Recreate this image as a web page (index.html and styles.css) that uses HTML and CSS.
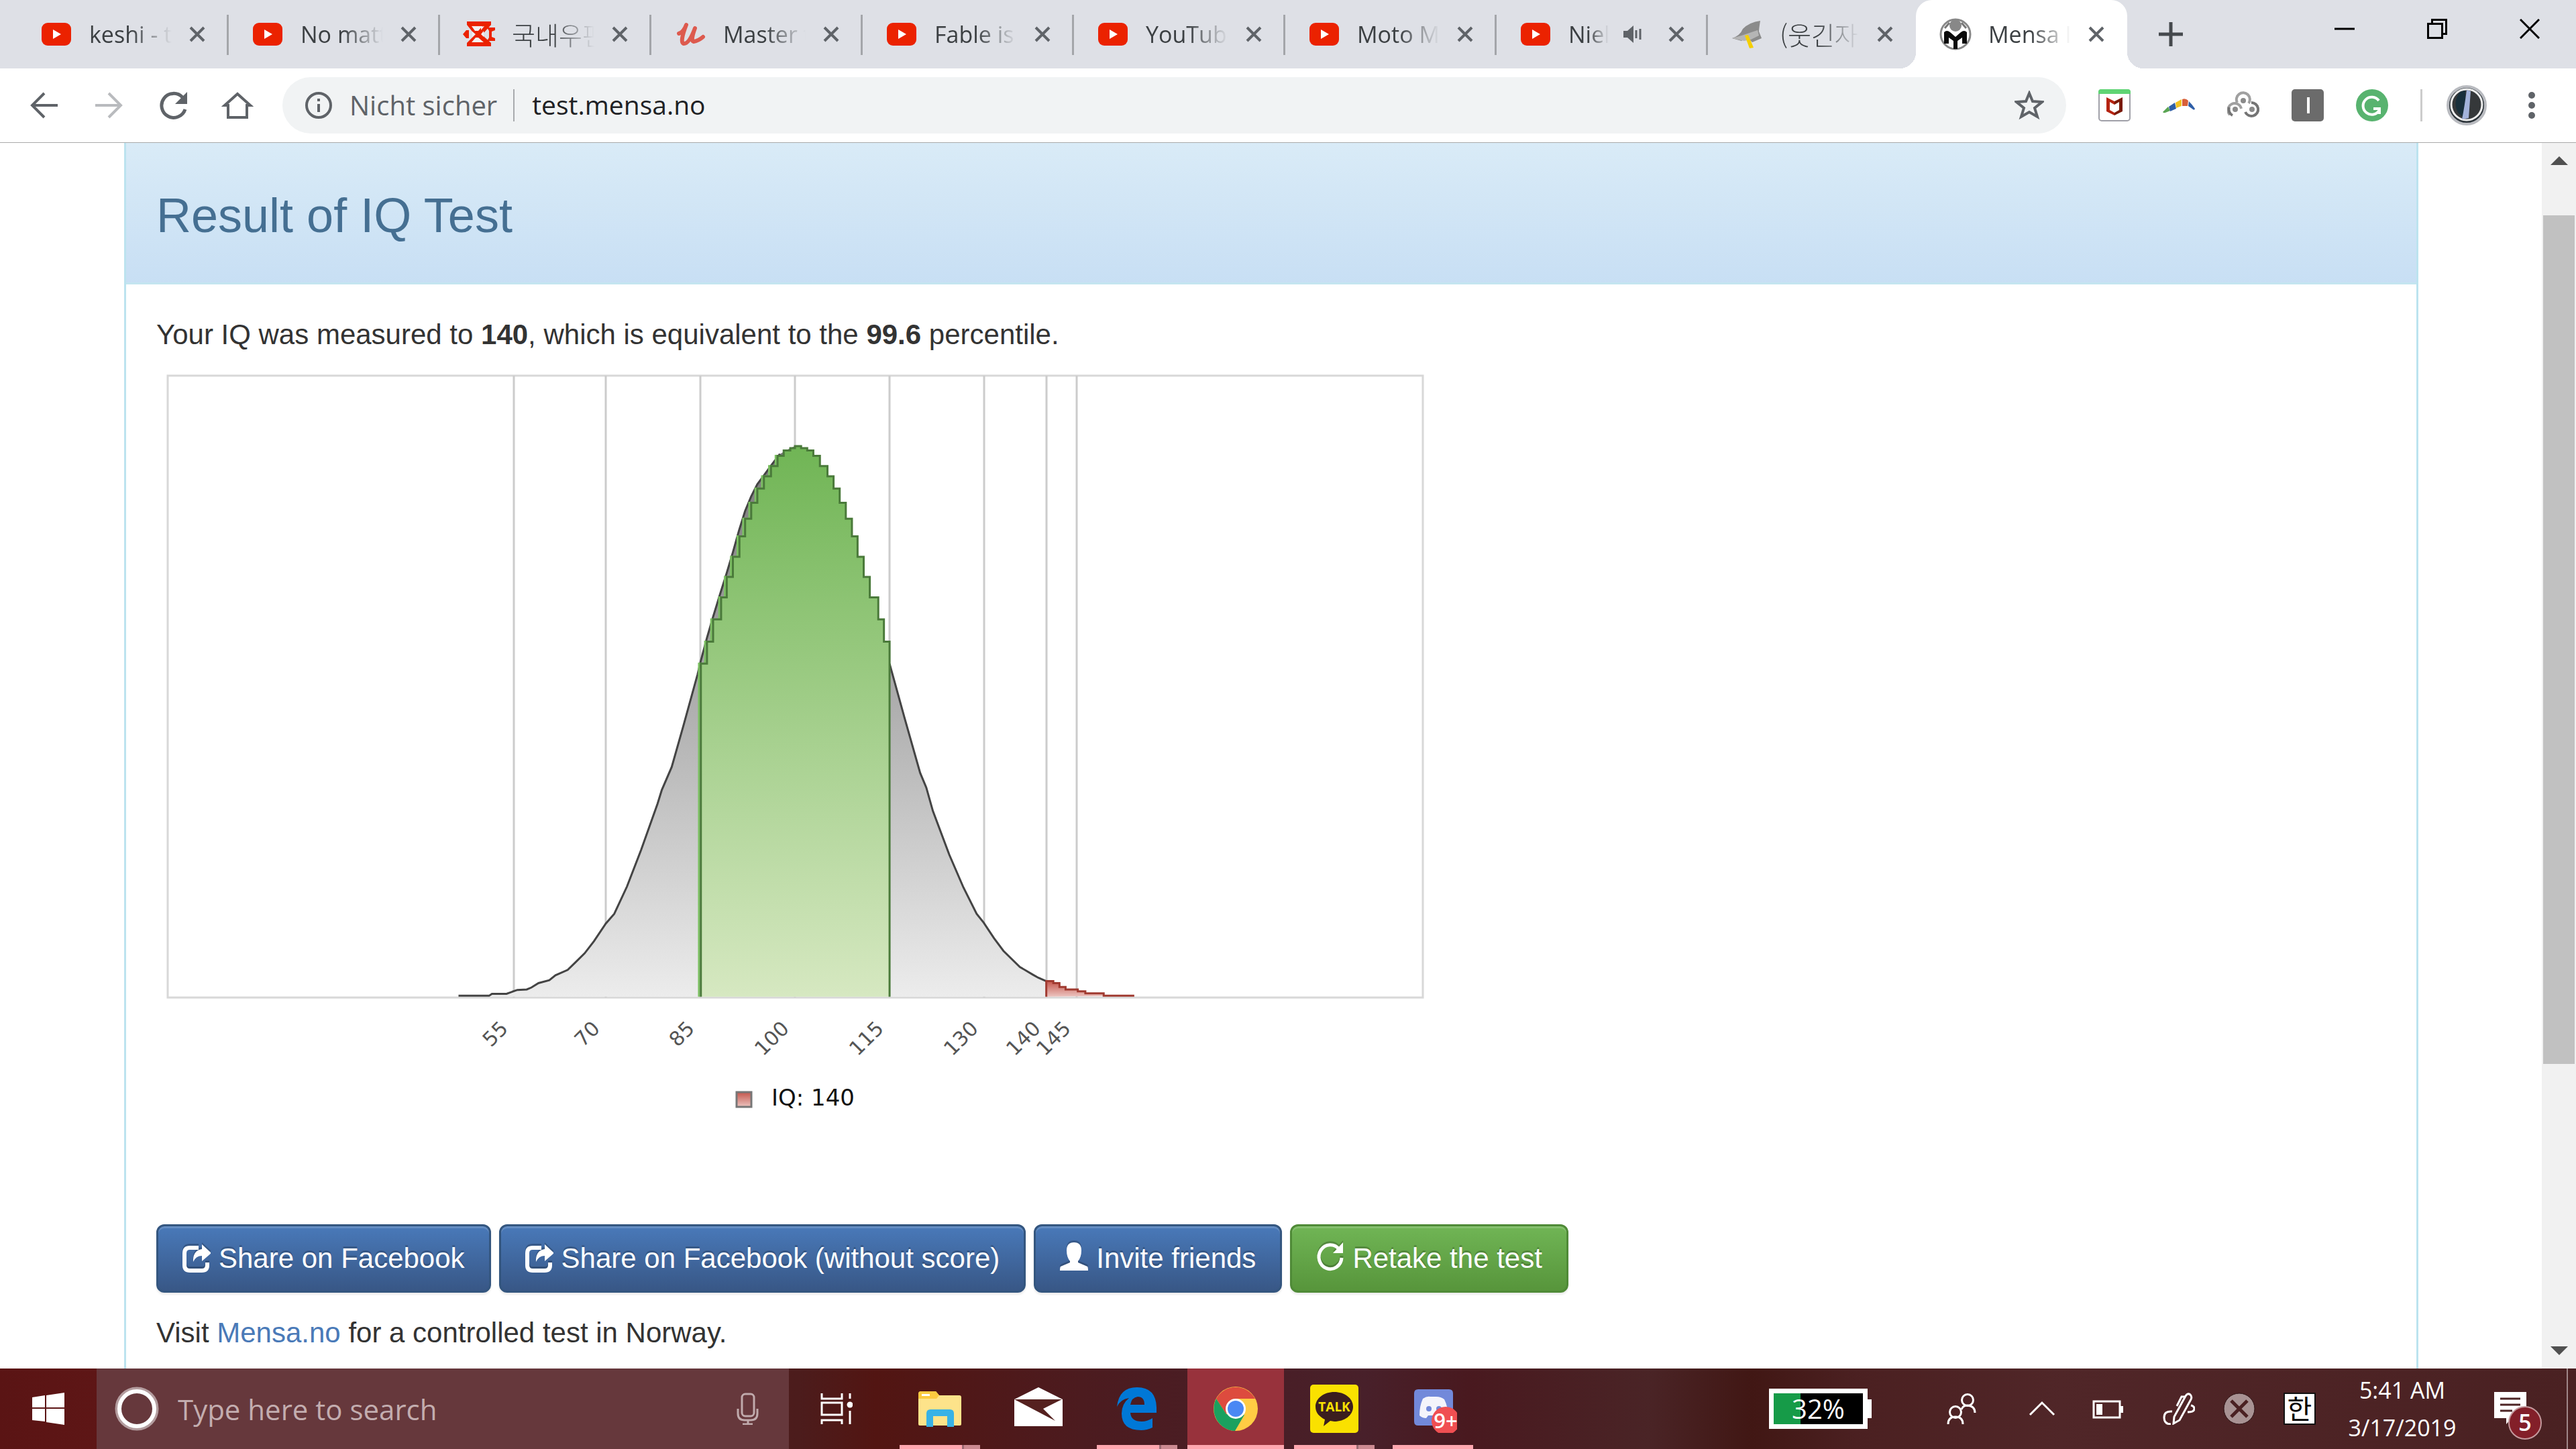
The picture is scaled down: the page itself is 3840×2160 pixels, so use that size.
FILE: index.html
```html
<!DOCTYPE html>
<html lang="en">
<head>
<meta charset="utf-8">
<title>Mensa</title>
<link rel="stylesheet" href="styles.css">
</head>
<body>
<svg class="defs" aria-hidden="true">
  <symbol id="yt" viewBox="0 0 48 48"><rect x="2" y="7" width="44" height="34" rx="9" fill="#eb2200"/><path d="M19 17v14l12-7z" fill="#fff"/></symbol>
  <symbol id="x" viewBox="0 0 24 24"><path d="M2 2l20 20M22 2L2 22" stroke="#5f6368" stroke-width="4" fill="none"/></symbol>
  <symbol id="share" viewBox="0 0 42 42"><path d="M24 5H11Q3 5 3 13v18q0 8 8 8h18q8 0 8-8v-4" fill="none" stroke="currentColor" stroke-width="6"/><path d="M29 0l14 13-14 12v-8q-9 0-13 9-1-17 13-19z" fill="currentColor"/></symbol>
</svg>

<header class="tabstrip">
  <div class="tab"><svg class="fav"><use href="#yt"/></svg><a class="title" href="#">keshi - the</a><button class="close" aria-label="Close"><svg><use href="#x"/></svg></button></div>
  <div class="tab"><svg class="fav"><use href="#yt"/></svg><a class="title" href="#">No matter</a><button class="close" aria-label="Close"><svg><use href="#x"/></svg></button></div>
  <div class="tab"><svg class="fav" viewBox="0 0 48 48"><path d="M6 5h36v5L33 20l-5 4 5 5 9 8v5H6v-5l8-8 5-5-5-4-8-10zM0 24l5-6h4v12H5zM36 14h12v4l-5 2v8l5 2v4H36l3-5V19z" fill="#eb2200"/><path d="M13 12h16l-6 7h-5zM27 13l5-1-5 6zM13 36h18l-8-7h-4zM14 20l4 4-4 4zM31 19l-4 5 4 4z" fill="#f4f0f2"/></svg><a class="title" lang="ko" href="#">국내우편</a><button class="close" aria-label="Close"><svg><use href="#x"/></svg></button></div>
  <div class="tab"><svg class="fav" viewBox="0 0 48 48"><path d="M7 23Q14 21 18 10Q8 36 14 38Q22 39 31 15Q24 34 29 35Q36 34 43 28" fill="none" stroke="#dd5a4e" stroke-width="6" stroke-linecap="round" stroke-linejoin="round"/></svg><a class="title" href="#">Master th</a><button class="close" aria-label="Close"><svg><use href="#x"/></svg></button></div>
  <div class="tab"><svg class="fav"><use href="#yt"/></svg><a class="title" href="#">Fable is a</a><button class="close" aria-label="Close"><svg><use href="#x"/></svg></button></div>
  <div class="tab"><svg class="fav"><use href="#yt"/></svg><a class="title" href="#">YouTube</a><button class="close" aria-label="Close"><svg><use href="#x"/></svg></button></div>
  <div class="tab"><svg class="fav"><use href="#yt"/></svg><a class="title" href="#">Moto Moto</a><button class="close" aria-label="Close"><svg><use href="#x"/></svg></button></div>
  <div class="tab"><svg class="fav"><use href="#yt"/></svg><a class="title" href="#">Niel</a><svg class="audio" viewBox="0 0 28 28"><path d="M0 9h6l9-8v26l-9-8H0z" fill="#5f6368"/><path d="M19 8v12M25 6v16" stroke="#5f6368" stroke-width="3"/></svg><button class="close" aria-label="Close"><svg><use href="#x"/></svg></button></div>
  <div class="tab last"><svg class="fav" viewBox="0 0 48 48"><path d="M2 30q12-4 16-14Q28 6 44 4q-2 12-2 16l4 10-14 6-8-8-8 6z" fill="#8b8b8b"/><path d="M2 30l14-4 24-8 2 8-12 6-10 2z" fill="#b5b5b5"/><path d="M21 26l5-1 8 19-6 1z" fill="#f5cf00"/></svg><a class="title" lang="ko" href="#">(웃긴자료</a><button class="close" aria-label="Close"><svg><use href="#x"/></svg></button></div>
  <div class="tab active"><svg class="fav" viewBox="0 0 48 48"><circle cx="24" cy="24" r="22" fill="#fff" stroke="#888" stroke-width="3"/><circle cx="24" cy="11" r="9" fill="#888"/><path d="M7 38V21q4-4 9 0l8 7 8-7q5-4 9 0v17h-7v-9l-7 5v12h-6V34l-7-5v9z" fill="#0a0a0a"/><path d="M15 7l-7 8M33 7l7 8" stroke="#777" stroke-width="3"/></svg><a class="title" href="#">Mensa IQ</a><button class="close" aria-label="Close"><svg><use href="#x"/></svg></button></div>
  <button class="newtab" aria-label="New tab"><svg viewBox="0 0 36 36"><path d="M18 0v36M0 18h36" stroke="#45494d" stroke-width="5"/></svg></button>
  <div class="winbtns">
    <button aria-label="Minimize"><svg viewBox="0 0 30 30"><path d="M0 15h30" stroke="#000" stroke-width="3"/></svg></button>
    <button aria-label="Restore"><svg viewBox="0 0 30 30"><path d="M1.500 7.500h21v21h-21zM7.500 7V1.500h21v21H23" fill="none" stroke="#000" stroke-width="3"/></svg></button>
    <button aria-label="Close window"><svg viewBox="0 0 30 30"><path d="M1 1l28 28M29 1L1 29" stroke="#000" stroke-width="3"/></svg></button>
  </div>
</header>

<nav class="toolbar">
  <button aria-label="Back"><svg viewBox="0 0 48 48"><path d="M44 24H8M24 6L6 24l18 18" fill="none" stroke="#5f6368" stroke-width="4"/></svg></button>
  <button aria-label="Forward"><svg viewBox="0 0 48 48"><path d="M4 24h36M24 6l18 18-18 18" fill="none" stroke="#b9bbbe" stroke-width="4"/></svg></button>
  <button aria-label="Reload"><svg viewBox="0 0 48 48"><path d="M38 12a18 18 0 1 0 4 18" fill="none" stroke="#5f6368" stroke-width="5"/><path d="M45 4v18H27z" fill="#5f6368"/></svg></button>
  <button aria-label="Home"><svg viewBox="0 0 48 48"><path d="M10 42V24H5L24 7l19 17h-5v18z" fill="none" stroke="#5f6368" stroke-width="4"/></svg></button>
  <form class="omnibox">
    <svg class="info" viewBox="0 0 42 42"><circle cx="21" cy="21" r="18" fill="none" stroke="#5f6368" stroke-width="4"/><path d="M21 11v4M21 19v12" stroke="#5f6368" stroke-width="4"/></svg>
    <label for="url">Nicht sicher</label>
    <input id="url" type="text" value="test.mensa.no">
    <button type="button" aria-label="Bookmark"><svg viewBox="0 0 44 44"><path d="M22 4l5 12 14 1-11 9 4 13-12-7-12 7 4-13L3 17l14-1z" fill="none" stroke="#5f6368" stroke-width="4"/></svg></button>
  </form>
  <div class="exts">
    <button aria-label="McAfee"><svg viewBox="0 0 48 48"><rect x="1" y="1" width="46" height="46" rx="4" fill="#fff" stroke="#a0a0a8" stroke-width="2"/><path d="M0 7V4q0-4 4-4h40q4 0 4 4v3z" fill="#5fd474"/><path d="M12 12l12 6v5l-7-4v12l7 4v4l-12-6z" fill="#b52310"/><path d="M36 12l-12 6v5l7-4v12l-7 4v4l12-6z" fill="#7a1a08"/></svg></button>
    <button aria-label="Boomerang"><svg viewBox="0 0 48 48"><path d="M0 34l8-8 3 6q-10 5-11 2z" fill="#5aa553"/><path d="M9 26l9-6 2 9-9 4z" fill="#2f5fa8"/><path d="M19 20l9-5v10l-8 3z" fill="#f3c320"/><path d="M29 15q5-2 9 2l-1 8h-8z" fill="#d8603a"/><path d="M39 18q5 5 9 11-1 3-3 1l-7-5z" fill="#2f5fa8"/></svg></button>
    <button aria-label="Links"><svg viewBox="0 0 48 48" fill="none" stroke-width="4"><path d="M4 38a10 10 0 1 1 17-9M15 20a10 10 0 1 1 17 1" stroke="#a0a0a0" /><path d="M8 39a10 10 0 0 1-5-12M36 20a10 10 0 1 1-9 14" stroke="#747474"/><g fill="#8a8a8a" stroke="none"><circle cx="24" cy="17" r="4"/><circle cx="12" cy="30" r="4"/><circle cx="37" cy="30" r="4"/></g></svg></button>
    <button aria-label="Instapaper"><svg viewBox="0 0 48 48"><rect width="48" height="48" rx="5" fill="#6b6b6b"/><path d="M25 12v24" stroke="#fff" stroke-width="4"/></svg></button>
    <button aria-label="Grammarly"><svg viewBox="0 0 48 48"><circle cx="24" cy="24" r="24" fill="#58b36f"/><path d="M34 17a13 13 0 1 0 1 14M26 29h9v8" fill="none" stroke="#fff" stroke-width="4"/></svg></button>
  </div>
  <button class="avatar" aria-label="Profile"><svg viewBox="0 0 60 60"><circle cx="30" cy="30" r="28" fill="#2c343a" stroke="#b9bbc0" stroke-width="4"/><circle cx="30" cy="29" r="23" fill="#35383a" stroke="#eee" stroke-width="3"/><path d="M20 10q-12 16-2 32l10 8V8z" fill="#19303c"/><path d="M30 7l6 2-3 40-10 2q4-20 7-44z" fill="#a3b3da"/></svg></button>
  <button class="menu" aria-label="Menu"><svg viewBox="0 0 12 48"><g fill="#5f6368"><circle cx="6" cy="9" r="5"/><circle cx="6" cy="24" r="5"/><circle cx="6" cy="39" r="5"/></g></svg></button>
</nav>

<div class="viewport">
  <main class="page">
    <section class="panel">
      <div class="panel-head"><h1>Result of IQ Test</h1></div>
      <div class="panel-body">
        <p>Your IQ was measured to <strong>140</strong>, which is equivalent to the <strong>99.6</strong> percentile.</p>
        <svg class="chart" viewBox="0 0 1900 1140" role="img" aria-label="IQ distribution">
          <defs>
            <linearGradient id="grey" x1="0" y1="0" x2="0" y2="1"><stop offset="0" stop-color="#787878"/><stop offset="1" stop-color="#ececec"/></linearGradient>
            <linearGradient id="green" x1="0" y1="0" x2="0" y2="1"><stop offset="0" stop-color="#70b555"/><stop offset="1" stop-color="#d6e8c1"/></linearGradient>
            <linearGradient id="red" x1="0" y1="0" x2="0" y2="1"><stop offset="0" stop-color="#c4564c"/><stop offset="1" stop-color="#ecc4c0"/></linearGradient>
          </defs>
          <path d="M17 20h1871v927H17z" fill="none" stroke="#d8d8d8" stroke-width="3"/>
          <path d="M533 20v927M670 20v927M811 20v927M952 20v927M1093 20v927M1234 20v927M1327 20v927M1372 20v927" stroke="#ccc" stroke-width="3"/>
          <g class="curves" transform="translate(407 0) scale(.7015 .727)">
            <path d="M62 1299H127L133 1295H164L187 1287 207 1286 217 1282 232 1273 255 1267 268 1257 294 1246 310 1231 330 1212 350 1187 375 1151 393 1131 420 1075 450 1000 485 905 494 877 515 830 540 745 570 640 577 612 590 565 603 522 617 478 632 432 645 390 658 345 671 305 684 275 697 250 711 232 726 212 745 188 767 176 777 172 790 176 803 192 816 213 830 234 846 259 859 288 872 321 885 357 898 399 910 440 923 482 936 527 954 573 978 618 1010 730 1043 842 1056 872 1070 920 1105 1010 1135 1077 1163 1131 1178 1149 1200 1181 1220 1207 1255 1240 1283 1256 1294 1262 1311 1269V1301H62z" fill="url(#grey)"/>
            <path d="M62 1299H127L133 1295H164L187 1287 207 1286 217 1282 232 1273 255 1267 268 1257 294 1246 310 1231 330 1212 350 1187 375 1151 393 1131 420 1075 450 1000 485 905 494 877 515 830 540 745 570 640 577 612 590 565 603 522 617 478 632 432 645 390 658 345 671 305 684 275 697 250 711 232 726 212 745 188M978 618L1010 730 1043 842 1056 872 1070 920 1105 1010 1135 1077 1163 1131 1178 1149 1200 1181 1220 1207 1255 1240 1283 1256 1294 1262 1311 1269" fill="none" stroke="#444" stroke-width="3"/>
            <path d="M573 1301V618H586V573H599V527H616V482H628V440H641V399H655V357H667V321H680V288H693V259H707V234H722V213H736V192H749" fill="none" stroke="#7cc062" stroke-width="3"/>
            <path d="M577 1301V618H590V573H603V527H620V482H632V440H645V399H659V357H671V321H684V288H697V259H711V234H726V213H740V192H753V181H767V176H777V172H790V176H803V181H816V192H830V213H846V234H859V259H872V288H885V321H898V357H910V399H923V440H936V482H954V527H966V573H978V1301" fill="url(#green)" stroke="#4a7a3a" stroke-width="3"/>
            <path d="M1311 1301V1269H1326V1273H1339V1281H1352V1286H1378V1290H1394V1294H1433V1299H1498" fill="url(#red)" stroke="#a03a30" stroke-width="3"/>
          </g>
          <g class="axis">
            <text transform="translate(526 995) rotate(-45)">55</text>
            <text transform="translate(663 995) rotate(-45)">70</text>
            <text transform="translate(804 995) rotate(-45)">85</text>
            <text transform="translate(945 995) rotate(-45)">100</text>
            <text transform="translate(1086 995) rotate(-45)">115</text>
            <text transform="translate(1227 995) rotate(-45)">130</text>
            <text transform="translate(1320 995) rotate(-45)">140</text>
            <text transform="translate(1365 995) rotate(-45)">145</text>
          </g>
          <path d="M865 1088h22v22h-22z" fill="url(#red)" stroke="#777" stroke-width="3"/>
          <text class="legend" x="917" y="1108">IQ: 140</text>
        </svg>
        <div class="actions">
          <button class="btn"><svg><use href="#share"/></svg>Share on Facebook</button>
          <button class="btn"><svg><use href="#share"/></svg>Share on Facebook (without score)</button>
          <button class="btn"><svg viewBox="0 0 42 42"><path d="M21-3q11 0 11 12 0 10-5 16v2l14 6q1 1 1 6H0q0-5 1-6l14-6v-2q-5-6-5-16Q10-3 21-3z" fill="currentColor"/></svg>Invite friends</button>
          <button class="btn success"><svg viewBox="0 0 42 42"><path d="M34 7A17 18 0 1 0 38 20" fill="none" stroke="currentColor" stroke-width="5"/><path d="M40-3v16H25z" fill="currentColor"/></svg>Retake the test</button>
        </div>
        <p>Visit <a href="#">Mensa.no</a> for a controlled test in Norway.</p>
      </div>
    </section>
  </main>
  <div class="scrollbar"><i class="up"></i><i class="track"><i class="thumb"></i></i><i class="down"></i></div>
</div>

<footer class="taskbar">
  <button class="start" aria-label="Start"><svg viewBox="0 0 48 48"><path d="M0 7l19-3v18H0zM21 4l27-4v22H21zM0 24h19v19L0 41zM21 24h27v24l-27-4z" fill="#fff"/></svg></button>
  <label class="search">
    <svg class="ring" viewBox="0 0 66 66"><circle cx="33" cy="33" r="29" fill="none" stroke="#b39c9e" stroke-width="7"/><circle cx="33" cy="33" r="26" fill="none" stroke="#fff" stroke-width="6"/></svg>
    <input type="text" placeholder="Type here to search" aria-label="Search">
    <svg class="mic" viewBox="0 0 33 48"><rect x="8" y="2" width="18" height="33" rx="5" fill="none" stroke="#c0aaac" stroke-width="3"/><path d="M2 24v7q0 10 10 10h9q10 0 10-10v-7M17 41v6M9 47h15" fill="none" stroke="#c0aaac" stroke-width="3"/></svg>
  </label>
  <div class="apps">
    <button class="view" aria-label="Task view"><svg viewBox="0 0 48 46"><path d="M2 0v8h30V0M2 46v-6h30v6M2 14h30v18H2zM44 0v8M44 26v20" fill="none" stroke="#fff" stroke-width="3"/><circle cx="44" cy="17" r="4.500" fill="#fff"/></svg></button>
    <button class="run multi" aria-label="Explorer"><svg viewBox="0 0 72 72"><path d="M4 14q0-4 4-4h22l5 6h30q3 0 3 3v40q0 2-2 2H6q-2 0-2-2z" fill="#fde38a"/><path d="M4 14q0-4 4-4h22l5 6-4 5H4z" fill="#fccb40"/><path d="M9 14h12v3H9z" fill="#fff"/><path d="M16 63V43q0-6 6-6h29q6 0 6 6v20H47V47H26v16z" fill="#38b2e6"/></svg></button>
    <button aria-label="Mail"><svg viewBox="0 0 72 72"><path d="M0 22L36 4l36 18v40H0z" fill="#fff"/><path d="M0 22h71L43 36l18 18z" fill="#55211f"/></svg></button>
    <button class="run multi" aria-label="Edge"><svg viewBox="0 0 72 72"><path d="M6 33Q9 4 36 4q28 0 29 30v8H26q1 13 17 13 8 0 16-5v14q-8 4-17 4Q13 68 13 43q0-14 11-23Q11 22 6 33zm20-3h21q0-12-10-12-9 1-11 12z" fill="#0078d7"/></svg></button>
    <button class="run current" aria-label="Chrome"><svg viewBox="0 0 72 72"><circle cx="36" cy="36" r="33" fill="#fc4"/><path d="M7 21A33 33 0 0 1 65 21H36L22 44z" fill="#dd4b3e"/><path d="M7 21A33 33 0 0 0 35 69l14-24-27-1z" fill="#1aa15f"/><circle cx="36" cy="36" r="15" fill="#fff"/><circle cx="36" cy="36" r="12" fill="#4a88f4"/></svg></button>
    <button class="run multi" aria-label="KakaoTalk"><svg viewBox="0 0 72 72"><rect width="72" height="72" rx="5" fill="#fae100"/><path d="M36 11c15 0 28 9 28 22S51 55 36 55l-6-1-10 8 2-10C14 48 8 42 8 33c0-13 13-22 28-22z" fill="#3b1e1e"/><text class="talk" x="36" y="40">TALK</text></svg></button>
    <button class="run" aria-label="Discord"><svg viewBox="0 0 72 72"><path d="M14 7h46q6 0 6 6v50l-10-2H14q-6 0-6-6V13q0-6 6-6z" fill="#7289da"/><path d="M21 21q6-4 11-3h9q7 0 12 4 6 12 5 24-5 4-10 4l-3-4H29l-3 4q-6 0-10-4 0-14 5-25z" fill="#f4f4fb"/><g fill="#7289da"><circle cx="30" cy="36" r="4"/><circle cx="45" cy="36" r="4"/></g><circle cx="55" cy="54" r="21" fill="#f04f52"/><text class="count" x="55" y="65">9+</text></svg></button>
  </div>
  <div class="tray">
    <div class="battery"><span>32%</span></div>
    <button class="people" aria-label="People"><svg viewBox="0 0 48 48" fill="none" stroke="#fff" stroke-width="3"><circle cx="31" cy="11" r="8.500"/><circle cx="13" cy="29" r="8.500"/><path d="M2 47q0-11 11-11t11 11M22 25q2-6 9-6 11 1 11 11"/></svg></button>
    <button class="chev" aria-label="Show hidden icons"><svg viewBox="0 0 48 48"><path d="M6 33l18-18 18 18" fill="none" stroke="#fff" stroke-width="3"/></svg></button>
    <button class="power" aria-label="Battery"><svg viewBox="0 0 48 48"><path d="M2 13h39v24H2z" fill="none" stroke="#fff" stroke-width="3"/><path d="M6 17h9v16H6zM42 20h4v10h-4z" fill="#fff"/></svg></button>
    <button aria-label="Pen"><svg viewBox="0 0 48 48" fill="none" stroke="#fff" stroke-width="3"><path d="M16 46l1-10L34 5q3-5 7-2 3 3 1 7L25 41zM34 6h-6l-7 14M14 28Q2 27 2 37q0 10 10 10M42 19q5 1 5 5 0 5-10 5"/></svg></button>
    <button aria-label="Blocked"><svg viewBox="0 0 48 48"><circle cx="24" cy="24" r="23" fill="#a89293" stroke="#2b1214" stroke-width="1"/><path d="M12 12l24 24M36 12L12 36" stroke="#4a2022" stroke-width="5"/></svg></button>
    <button class="ime" aria-label="Korean input">한</button>
    <div class="clock"><span>5:41 AM</span><span>3/17/2019</span></div>
    <button class="notify" aria-label="Notifications"><svg viewBox="0 0 72 72"><path d="M0 0h48v39H26l-8 9v-9H0z" fill="#fff"/><path d="M9 10h30M9 19h30M9 28h18" stroke="#4d2425" stroke-width="3"/><circle cx="46" cy="46" r="24" fill="#831f29" stroke="#c59a9e" stroke-width="2"/><text class="five" x="46" y="58">5</text></svg></button>
  </div>
</footer>
</body>
</html>
```

FILE: styles.css
```css
* { box-sizing: border-box; }
body {
  margin: 0;
  height: 100vh;
  display: flex;
  flex-direction: column;
  overflow: hidden;
  background: #fff;
  font-family: "Open Sans", "Noto Sans CJK KR", sans-serif;
}
button { border: 0; padding: 0; background: none; color: inherit; font: inherit; }
button svg { display: block; width: 100%; height: 100%; }
input { border: 0; padding: 0; background: none; font: inherit; outline: 0; min-width: 0; }
.defs { position: absolute; width: 0; height: 0; }

/* tab strip */
.tabstrip { display: flex; flex: none; height: 102px; padding-left: 25px; background: #dee0e6; }
.tab { position: relative; display: flex; align-items: center; width: 315px; padding: 0 34px 0 35px; }
.tab::after { content: ""; position: absolute; right: -1px; top: 22px; width: 3px; height: 60px; background: #a4a6aa; }
.tab.last { width: 311px; }
.tab.last::after { display: none; }
.fav { width: 48px; height: 48px; flex: none; }
.title { flex: 1; margin: 0 26px 0 25px; overflow: hidden; white-space: nowrap; font-size: 34px; line-height: 48px; color: #3c4043; text-decoration: none; -webkit-mask-image: linear-gradient(90deg, #000 calc(100% - 60px), transparent); mask-image: linear-gradient(90deg, #000 calc(100% - 60px), transparent); }
.title[lang="ko"] { font-family: "Noto Sans CJK KR", sans-serif; font-weight: 300; font-size: 38px; }
.close { width: 24px; height: 24px; }
.audio { width: 28px; height: 28px; margin-right: 39px; }
.tab:has(.audio) .title { margin-right: 22px; -webkit-mask-image: linear-gradient(90deg, #000 50%, transparent); mask-image: linear-gradient(90deg, #000 50%, transparent); }
.tab.active { background: #fff; border-radius: 24px 24px 0 0; }
.tab.active::before, .tab.active::after { content: ""; position: absolute; top: auto; bottom: 0; width: 24px; height: 24px; }
.tab.active::before { left: -24px; background: radial-gradient(circle at 0 0, transparent 24px, #fff 24px); }
.tab.active::after { right: -24px; background: radial-gradient(circle at 100% 0, transparent 24px, #fff 24px); }
.newtab { width: 36px; height: 36px; margin: 33px 0 0 47px; }
.winbtns { display: flex; gap: 108px; margin-left: auto; padding: 28px 54px 0 0; }
.winbtns button { width: 30px; height: 30px; }

/* toolbar */
.toolbar { display: flex; align-items: center; flex: none; height: 111px; padding: 0 60px 0 42px; border-bottom: 1px solid #aaa; background: #fff; }
.toolbar > button { width: 48px; height: 48px; margin-right: 48px; flex: none; }
.toolbar > button:nth-of-type(4) { margin-right: 43px; }
.omnibox { flex: 1; display: flex; align-items: center; height: 84px; padding: 0 33px; border-radius: 42px; background: #f1f3f4; font-size: 40px; }
.info { width: 42px; height: 42px; margin-right: 25px; }
.omnibox label { color: #5f6368; padding-right: 24px; line-height: 48px; border-right: 2px solid #a8aaad; white-space: nowrap; }
.omnibox input { flex: 1; margin-left: 26px; color: #202124; font-size: 39px; line-height: 48px; padding-bottom: 2px; }
.omnibox button { width: 44px; height: 44px; }
.exts { display: flex; gap: 48px; margin-left: 48px; padding-right: 48px; border-right: 3px solid #ccc; }
.exts button { width: 48px; height: 48px; }
.toolbar > .avatar { width: 60px; height: 60px; margin: 0 61px 0 36px; }
.toolbar > .menu { width: 12px; margin: 0; }

/* page */
.viewport { flex: 1; min-height: 0; display: flex; }
.page { flex: 1; padding: 0 184px 0 185px; overflow: hidden; font-family: "Liberation Sans", Arial, sans-serif; font-size: 42px; line-height: 60px; color: #333; }
.panel { border: 3px solid #bce3ef; border-top: 0; height: 2100px; }
.panel-head { padding: 68px 45px 60px; border-bottom: 3px solid #c4e5f0; background: linear-gradient(#d9ebf7, #c8dff4); }
h1 { margin: 0; font-size: 72px; line-height: 80px; font-weight: 400; color: #456f92; }
.panel-body { padding: 45px; }
.panel-body p { margin: 0; }
.panel-body a { color: #4a7ab8; text-decoration: none; }
.chart { display: block; width: 1900px; max-width: 100%; margin-top: 11px; }
.curves path { vector-effect: non-scaling-stroke; }
.axis text { font: 30px "DejaVu Sans", sans-serif; fill: #555; text-anchor: end; }
.legend { font: 34px "DejaVu Sans", sans-serif; fill: #111; }
.actions { display: flex; gap: 12px; margin: 145px 0 30px; }
.btn { display: flex; align-items: center; gap: 12px; height: 102px; padding: 0 36px; border: 3px solid #34567f; border-radius: 12px; background: linear-gradient(#4979b9, #385786); box-shadow: inset 0 3px 0 rgba(255,255,255,.15), 0 3px 3px rgba(0,0,0,.08); color: #fff; text-shadow: 0 -3px 0 rgba(0,0,0,.2); white-space: nowrap; }
.btn svg { width: 42px; height: 42px; overflow: visible; filter: drop-shadow(0 -3px 0 rgba(0,0,0,.2)); }
.btn.success { border-color: #4f8a37; background: linear-gradient(#70b555, #57953b); }

.scrollbar { width: 51px; display: flex; flex-direction: column; align-items: center; padding: 20px 0; background: #f1f1f1; }
.up, .down { border: 13px solid transparent; }
.up { border-top: 0; border-bottom: 13px solid #505050; }
.down { border-bottom: 0; border-top: 13px solid #505050; }
.track { flex: 1; width: 100%; padding: 75px 2px 0; }
.thumb { display: block; height: 75%; background: #c1c1c1; }

/* taskbar */
.taskbar { display: flex; flex: none; height: 120px; color: #fff; background: linear-gradient(90deg, #5a1414 0, #5e1616 4%, #4c1c1c 31%, #521512 34%, #4c1b1f 42%, #48202a 53%, #49191f 57%, #4a2426 64%, #411714 68%, #4b2021 72%, #502628 80%, #4a2122 100%); }
.start { width: 144px; padding: 36px 48px; }
.search { display: flex; align-items: center; width: 1032px; padding: 0 45px 0 27px; background: #66383c; font-size: 42px; }
.ring { width: 66px; height: 66px; }
.search input { flex: 1; margin-left: 28px; }
.search input::placeholder { color: #c3adaf; opacity: 1; }
.mic { width: 33px; height: 48px; }
.apps { display: flex; gap: 3px; }
.apps button { position: relative; width: 144px; height: 120px; padding: 24px 36px; }
.apps .view { width: 150px; padding: 37px 55px 37px 47px; }
.run::after { content: ""; position: absolute; left: 12px; right: 12px; bottom: 0; height: 6px; background: #ffa7af; }
.multi::after { background: linear-gradient(90deg, #ffa7af 93px, #9c6a72 93px, #9c6a72 96px, #cc8a91 96px); }
.apps .current { background: #98323c; }
.current::after { left: 0; right: 0; }
.talk { font: 700 19px "Open Sans", sans-serif; fill: #fae100; text-anchor: middle; }
.count { font: 600 31px "Open Sans", sans-serif; fill: #fff; text-anchor: middle; }
.five { font: 600 34px "Open Sans", sans-serif; fill: #fff; text-anchor: middle; }
.tray { display: flex; align-items: center; margin-left: auto; padding-right: 12px; }
.tray button { width: 48px; height: 48px; margin-right: 42px; }
.battery { position: relative; width: 147px; height: 60px; margin-right: 118px; border: 7px solid #fff; background: linear-gradient(90deg, #169b48 40px, #000 40px); font-size: 40px; line-height: 46px; text-align: center; }
.battery::after { content: ""; position: absolute; right: -13px; top: 9px; width: 6px; height: 28px; background: #fff; }
.tray .people { margin-right: 70px; }
.tray .chev { margin-right: 51px; }
.tray .power { margin-right: 57px; }
.tray .ime { width: 48px; height: 48px; margin-right: 48px; border: 2px solid #111; background: #fff; color: #000; font-size: 40px; line-height: 44px; }
.clock { width: 162px; display: flex; flex-direction: column; align-items: center; font-size: 34px; line-height: 56px; white-space: nowrap; }
.tray .notify { width: 72px; height: 72px; margin: 22px 36px 0 56px; }
.tray::after { content: ""; width: 2px; height: 120px; background: #a08788; }
```
